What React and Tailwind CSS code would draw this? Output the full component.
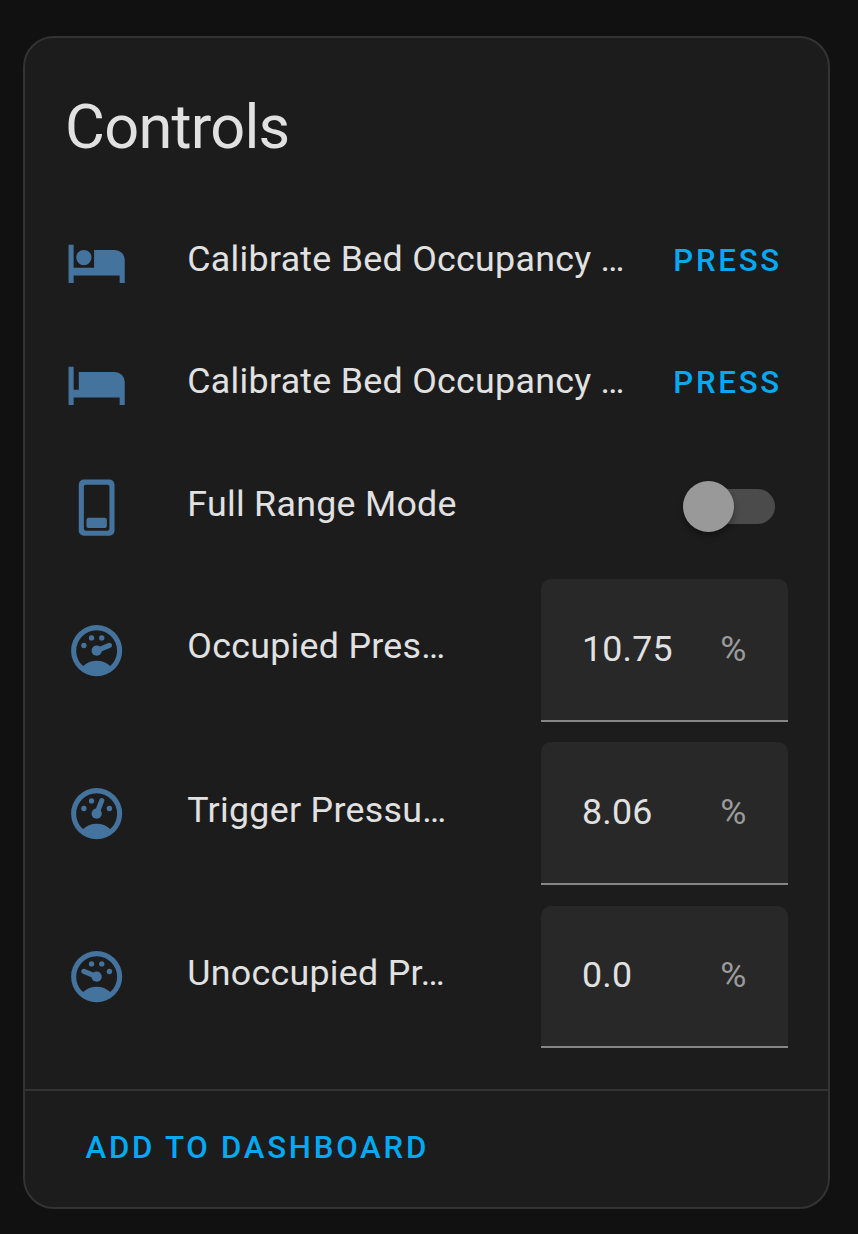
const GAUGE_FACE =
  "M12 2A10 10 0 0 0 2 12A10 10 0 0 0 12 22A10 10 0 0 0 22 12A10 10 0 0 0 12 2M12 4A8 8 0 0 1 20 12C20 14.4 19 16.5 17.3 18C15.9 16.7 14 16 12 16C10 16 8.2 16.7 6.7 18C5 16.5 4 14.4 4 12A8 8 0 0 1 12 4Z";

const MARKS = [
  [7, 10],
  [10, 7],
  [14, 7],
  [17, 10],
];

function Icon({ children }) {
  return (
    <svg viewBox="0 0 24 24" className="size-[61.3px] shrink-0 fill-[#44739e]">
      {children}
    </svg>
  );
}

function Gauge({ mark }) {
  return (
    <Icon>
      <path d={GAUGE_FACE} />
      {MARKS.map(([x, y], i) =>
        i === mark ? (
          <path key={i} d={`M12 12L${x} ${y - 0.1}`} stroke="#44739e" strokeWidth="2" strokeLinecap="round" />
        ) : (
          <circle key={i} cx={x} cy={y} r="1.05" />
        )
      )}
      <circle cx="12" cy="12" r="2" />
    </Icon>
  );
}

const bedOccupied = (
  <Icon>
    <path d="M19 7H11V14H3V5H1V20H3V17H21V20H23V11A4 4 0 0 0 19 7M7 13A3 3 0 0 0 10 10A3 3 0 0 0 7 7A3 3 0 0 0 4 10A3 3 0 0 0 7 13Z" />
  </Icon>
);

const bedEmpty = (
  <Icon>
    <path d="M19 7H5V14H3V5H1V20H3V17H21V20H23V11A4 4 0 0 0 19 7Z" />
  </Icon>
);

const rangeMode = (
  <Icon>
    <path
      fillRule="evenodd"
      d="M7 1H17A2 2 0 0 1 19 3V21A2 2 0 0 1 17 23H7A2 2 0 0 1 5 21V3A2 2 0 0 1 7 1M7.7 3A.7 .7 0 0 0 7 3.7V20.3A.7 .7 0 0 0 7.7 21H16.3A.7 .7 0 0 0 17 20.3V3.7A.7 .7 0 0 0 16.3 3Z"
    />
    <rect x="8" y="16" width="8" height="4" rx="0.8" />
  </Icon>
);

function Row({ icon, label, tall, children }) {
  return (
    <div className={`flex items-center ${tall ? "h-[142.9px]" : "h-[102.1px]"}`}>
      {icon}
      <span className="ml-[60.5px] flex-1 whitespace-nowrap pb-[7px] text-[35.75px] leading-[51px] tracking-[0.29px]">
        {label}
      </span>
      {children}
    </div>
  );
}

function PressButton() {
  return (
    <button className="mr-[5.5px] pb-[4px] text-[31.2px] font-medium leading-[40px] tracking-[2.75px] text-[#03a9f4]">
      PRESS
    </button>
  );
}

function Toggle() {
  return (
    <button role="switch" aria-checked="false" className="mb-[2px] mr-[12.5px] flex h-[51px] w-[92px] items-center">
      <span className="size-[51px] shrink-0 rounded-full bg-[#999999] shadow-[0_4px_6px_rgba(0,0,0,0.35)] z-10" />
      <span className="-ml-[44px] h-[35px] w-[85px] shrink-0 rounded-full bg-[#4b4b4b]" />
    </button>
  );
}

function NumberField({ value }) {
  return (
    <div className="flex h-full w-[246.5px] shrink-0 items-center justify-between rounded-t-[10px] border-b-2 border-[#868686] bg-[#282828] pl-[41px] pr-[41px] text-[35.75px] leading-[51px]">
      <span className="tracking-[0.2px]">{value}</span>
      <span className="text-[#9b9b9b]">%</span>
    </div>
  );
}

export default function App() {
  return (
    <main className="h-[1234px] w-[858px] bg-[#111111] pl-[23px] pt-[36px] font-[Roboto,sans-serif] text-[#e1e1e1]">
      <section className="flex h-[1173px] w-[807px] flex-col rounded-[31px] border-2 border-[#333333] bg-[#1c1c1c]">
        <h1 className="h-[173.5px] pl-[40px] pt-[40px] text-[61.3px] leading-[98px] tracking-[-0.74px]">Controls</h1>
        <div className="flex flex-col gap-[20.4px] pl-[40.5px] pr-[40.5px]">
          <Row icon={bedOccupied} label="Calibrate Bed Occupancy …"><PressButton /></Row>
          <Row icon={bedEmpty} label="Calibrate Bed Occupancy …"><PressButton /></Row>
          <Row icon={rangeMode} label="Full Range Mode"><Toggle /></Row>
          <Row tall icon={<Gauge mark={3} />} label="Occupied Pres…"><NumberField value="10.75" /></Row>
          <Row tall icon={<Gauge mark={2} />} label="Trigger Pressu…"><NumberField value="8.06" /></Row>
          <Row tall icon={<Gauge mark={0} />} label="Unoccupied Pr…"><NumberField value="0.0" /></Row>
        </div>
        <footer className="mt-[40.4px] flex flex-1 items-center border-t-2 border-[#333333] pl-[60.5px]">
          <button className="pb-[2px] text-[31.2px] font-medium leading-[40px] tracking-[2.75px] text-[#03a9f4]">
            ADD TO DASHBOARD
          </button>
        </footer>
      </section>
    </main>
  );
}
